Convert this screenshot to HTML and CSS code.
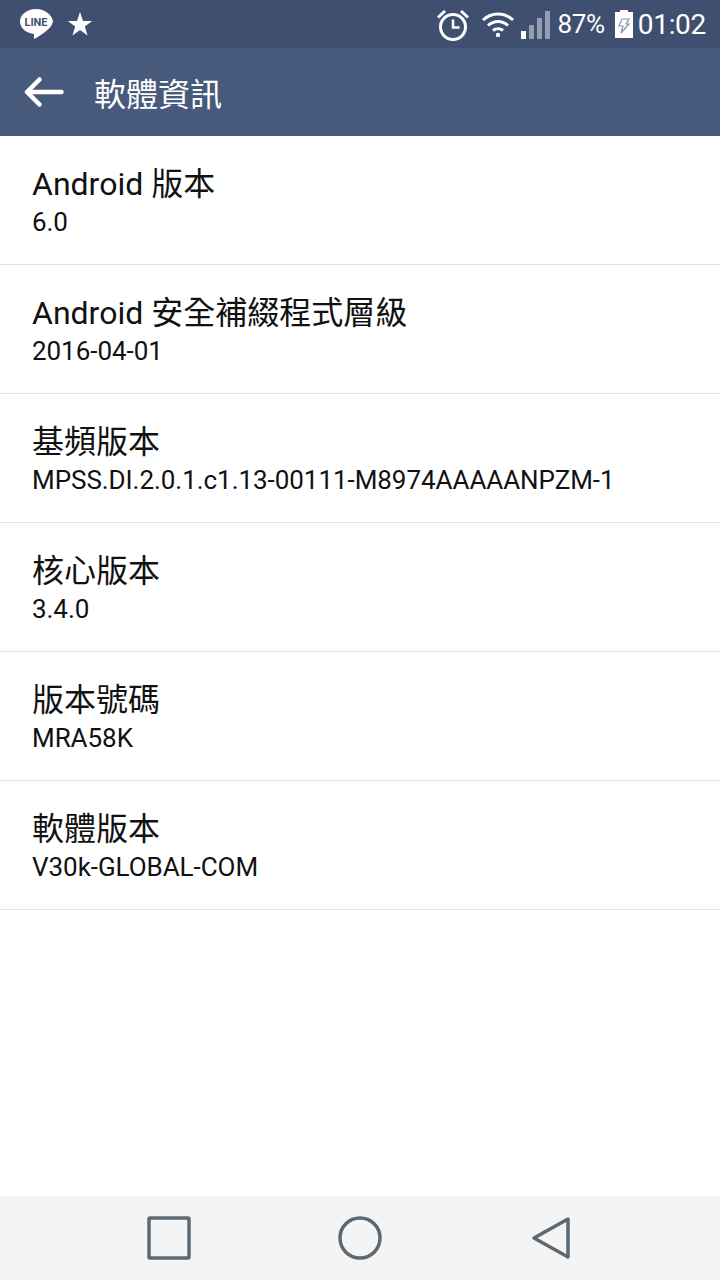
FILE: index.html
```html
<!DOCTYPE html>
<html lang="zh-Hant">
<head>
    <meta charset="UTF-8">
    <meta name="viewport" content="width=device-width, initial-scale=1.0">
    <title>軟體資訊</title>
    <link rel="stylesheet" href="styles.css">
</head>
<body>
    <div class="screen">
        <!-- Status bar -->
        <div class="status-bar">
            <div class="status-left">
                <svg class="icon-line" width="34" height="32" viewBox="0 0 34 32">
                    <path d="M17 1C8 1 1 6.600 1 13.500c0 6.500 6 11.300 13 12.200 1 .2 1.100 .8 1 1.600l-.2 2.700c0 .8 .6 1.100 1.400 .6 3-1.700 15.800-9 17.300-15.500 .3-.6 .5-1.400 .5-1.600C33 6.600 26 1 17 1z" fill="#fff"/>
                    <text x="17" y="18" class="line-text" text-anchor="middle">LINE</text>
                </svg>
                <svg class="icon-star" width="26" height="26" viewBox="0 0 26 26">
                    <path d="M13 1l3 8.900h9.200l-7.400 5.500 2.800 9L13 19l-7.600 5.400 2.800-9L.8 9.900H10z" fill="#fff"/>
                </svg>
            </div>
            <div class="status-right">
                <svg class="icon-alarm" width="34" height="34" viewBox="0 0 34 34">
                    <circle cx="17" cy="19" r="12.500" fill="none" stroke="#fff" stroke-width="3"/>
                    <path d="M17 11.500v8h6.500" fill="none" stroke="#fff" stroke-width="2.500"/>
                    <path d="M2 9.500L9 3M32 9.500L25 3" fill="none" stroke="#fff" stroke-width="3"/>
                </svg>
                <svg class="icon-wifi" width="34" height="26" viewBox="0 0 34 26">
                    <path d="M2 9c9-8 21-8 30 0M7 14.500c6-5.500 14-5.500 20 0M12 19.500c3-2.500 7-2.500 10 0" fill="none" stroke="#fff" stroke-width="3"/>
                    <circle cx="17" cy="24" r="2.200" fill="#fff"/>
                </svg>
                <div class="signal">
                    <span class="bar bar-1"></span>
                    <span class="bar bar-2"></span>
                    <span class="bar bar-3"></span>
                    <span class="bar bar-4"></span>
                </div>
                <span class="battery-text">87%</span>
                <svg class="icon-battery" width="18" height="28" viewBox="0 0 18 28">
                    <path d="M5 0h8v2h5v26H0V2h5z" fill="#fff"/>
                    <path d="M7 9h7l-3 5h3l-8 9 2-7H4z" fill="#fff" stroke="#8a93a5" stroke-width="1.200"/>
                </svg>
                <span class="clock">01:02</span>
            </div>
        </div>

        <!-- Action bar -->
        <div class="action-bar">
            <svg class="icon-back" width="40" height="32" viewBox="0 0 40 32">
                <path d="M37.500 16H3.500M15.500 3.500L3 16l12.500 12.500" fill="none" stroke="#fff" stroke-width="4.500" stroke-linecap="round" stroke-linejoin="round"/>
            </svg>
            <h1 class="action-title">軟體資訊</h1>
        </div>

        <!-- Info list -->
        <div class="info-list">
            <div class="info-row">
                <div class="info-title">Android 版本</div>
                <div class="info-value">6.0</div>
            </div>
            <div class="info-row">
                <div class="info-title">Android 安全補綴程式層級</div>
                <div class="info-value">2016-04-01</div>
            </div>
            <div class="info-row">
                <div class="info-title">基頻版本</div>
                <div class="info-value">MPSS.DI.2.0.1.c1.13-00111-M8974AAAAANPZM-1</div>
            </div>
            <div class="info-row">
                <div class="info-title">核心版本</div>
                <div class="info-value">3.4.0</div>
            </div>
            <div class="info-row">
                <div class="info-title">版本號碼</div>
                <div class="info-value">MRA58K</div>
            </div>
            <div class="info-row">
                <div class="info-title">軟體版本</div>
                <div class="info-value">V30k-GLOBAL-COM</div>
            </div>
        </div>

        <!-- Navigation bar -->
        <div class="nav-bar">
            <svg width="44" height="44" viewBox="0 0 44 44">
                <rect x="2" y="2" width="40" height="40" rx="1" fill="none" stroke="#5c6872" stroke-width="3.500"/>
            </svg>
            <svg width="44" height="44" viewBox="0 0 44 44">
                <circle cx="22" cy="22" r="20" fill="none" stroke="#5c6872" stroke-width="3.500"/>
            </svg>
            <svg width="44" height="44" viewBox="0 0 44 44">
                <path d="M39 3v38L5 22z" fill="none" stroke="#5c6872" stroke-width="3.500" stroke-linejoin="round"/>
            </svg>
        </div>
    </div>
</body>
</html>
```

FILE: styles.css
```css
* {
    margin: 0;
    padding: 0;
    box-sizing: border-box;
    font-family: 'Roboto', 'Noto Sans CJK TC', sans-serif;
}

body {
    background-color: #fff;
}

.screen {
    width: 720px;
    height: 1280px;
    display: flex;
    flex-direction: column;
    overflow: hidden;
}

.status-bar {
    height: 48px;
    background-color: #3f4f6f;
    color: #fff;
    display: flex;
    justify-content: space-between;
    align-items: center;
    padding: 0 14px 0 19px;
}

.status-left,
.status-right {
    display: flex;
    align-items: center;
}

.status-left {
    gap: 14px;
}

.line-text {
    font-size: 11px;
    font-weight: 700;
    fill: #3f4f6f;
}

.icon-alarm {
    margin-top: 1px;
}

.icon-wifi {
    margin-left: 11px;
}

.signal {
    display: flex;
    align-items: flex-end;
    gap: 3px;
    height: 28px;
    margin-left: 6px;
    margin-top: 1px;
}

.bar {
    width: 5px;
    background-color: rgba(255, 255, 255, 0.45);
}

.bar-1 {
    height: 8px;
    background-color: #fff;
}

.bar-2 {
    height: 14px;
}

.bar-3 {
    height: 21px;
}

.bar-4 {
    height: 28px;
}

.battery-text {
    font-size: 26px;
    letter-spacing: -0.3px;
    margin-left: 7px;
}

.icon-battery {
    margin-left: 10px;
}

.clock {
    font-size: 28px;
    letter-spacing: -0.3px;
    margin-left: 5px;
}

.action-bar {
    height: 88px;
    background-color: #475a7c;
    display: flex;
    align-items: center;
    padding-left: 24px;
}

.action-title {
    color: #fff;
    font-size: 32px;
    font-weight: 400;
    margin-left: 30px;
    margin-top: -1px;
}

.info-list {
    flex: 1;
}

.info-row {
    height: 129px;
    padding: 28px 32px 0;
    border-bottom: 1px solid #e3e3e3;
}

.info-title {
    font-size: 32px;
    line-height: 40px;
    color: #111;
}

.info-value {
    font-size: 26px;
    line-height: 36px;
    letter-spacing: -0.05px;
    color: #111;
}

.nav-bar {
    height: 84px;
    background-color: #f4f4f4;
    display: flex;
    justify-content: center;
    align-items: center;
    gap: 147px;
}
```
